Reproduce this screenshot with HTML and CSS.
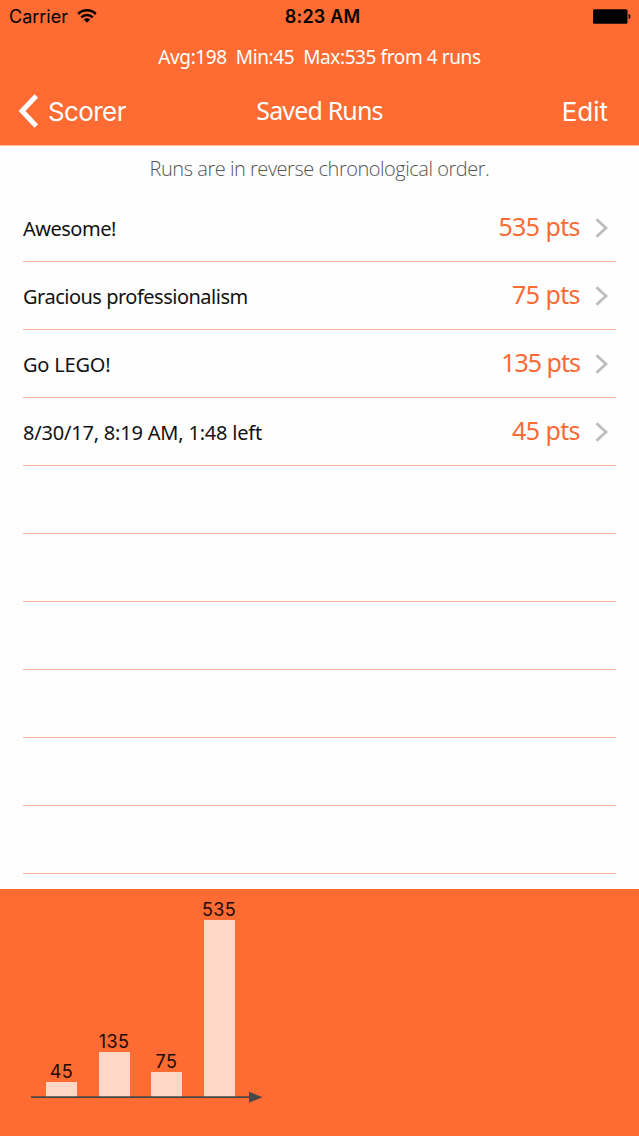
FILE: index.html
```html
<!DOCTYPE html>
<html lang="en">
<head>
    <meta charset="UTF-8">
    <meta name="viewport" content="width=device-width, initial-scale=1.0">
    <title>Saved Runs</title>
    <link rel="stylesheet" href="styles.css">
</head>
<body>
    <header class="header">
        <div class="status-bar">
            <div class="carrier">
                <span>Carrier</span>
                <svg class="wifi" width="20" height="14" viewBox="0 0 20 14">
                    <path d="M1.2 5a12.4 12.4 0 0 1 17.6 0M4.3 8.4a8 8 0 0 1 11.4 0" fill="none" stroke="#000" stroke-width="2.5"/>
                    <path d="M10 13.8L6.8 10.6a4.6 4.6 0 0 1 6.4 0z"/>
                </svg>
            </div>
            <div class="clock">8:23 AM</div>
            <svg class="battery" width="38" height="15" viewBox="0 0 38 15">
                <rect x="0" y="0.3" width="34.5" height="14.4" rx="1.5"/>
                <path d="M35.6 4.8c2.4 0.8 2.4 4.6 0 5.4z"/>
            </svg>
        </div>
        <div class="stats">Avg:198  Min:45  Max:535 from 4 runs</div>
        <nav class="nav">
            <a class="back">
                <svg width="20" height="34" viewBox="0 0 20 34">
                    <path d="M18.3 2L4 17l14.3 15" fill="none" stroke="#fff" stroke-width="5"/>
                </svg>
                <span>Scorer</span>
            </a>
            <h1 class="title">Saved Runs</h1>
            <a class="edit">Edit</a>
        </nav>
    </header>

    <main class="runs">
        <p class="hint">Runs are in reverse chronological order.</p>
        <ul class="run-list">
            <li class="run">
                <span class="name">Awesome!</span>
                <span class="points">535 pts</span>
                <svg class="arrow" width="14" height="20" viewBox="0 0 14 20"><path d="M1.5 1.2l9.5 8.8-9.5 8.8"/></svg>
            </li>
            <li class="run">
                <span class="name">Gracious professionalism</span>
                <span class="points">75 pts</span>
                <svg class="arrow" width="14" height="20" viewBox="0 0 14 20"><path d="M1.5 1.2l9.5 8.8-9.5 8.8"/></svg>
            </li>
            <li class="run">
                <span class="name loose">Go LEGO!</span>
                <span class="points tight">135 pts</span>
                <svg class="arrow" width="14" height="20" viewBox="0 0 14 20"><path d="M1.5 1.2l9.5 8.8-9.5 8.8"/></svg>
            </li>
            <li class="run">
                <span class="name loose">8/30/17, 8:19 AM, 1:48 left</span>
                <span class="points">45 pts</span>
                <svg class="arrow" width="14" height="20" viewBox="0 0 14 20"><path d="M1.5 1.2l9.5 8.8-9.5 8.8"/></svg>
            </li>
            <li class="run"></li>
            <li class="run"></li>
            <li class="run"></li>
            <li class="run"></li>
            <li class="run"></li>
            <li class="run"></li>
        </ul>
    </main>

    <footer class="chart">
        <div class="bars">
            <div class="column"><span>45</span><div class="bar" style="height: 15px"></div></div>
            <div class="column"><span>135</span><div class="bar" style="height: 45px"></div></div>
            <div class="column"><span>75</span><div class="bar" style="height: 25px"></div></div>
            <div class="column"><span>535</span><div class="bar" style="height: 177px"></div></div>
        </div>
        <svg class="axis" width="232" height="12" viewBox="0 0 232 12">
            <path d="M0 6.2h220" stroke="#484848" stroke-width="1.8"/>
            <path d="M218 0.7v11l13.5-5.5z" fill="#484848"/>
        </svg>
    </footer>
</body>
</html>
```
FILE: styles.css
```css
body {
    font-family: "Noto Sans", "Open Sans", sans-serif;
    background-color: #fefefe;
    margin: 0;
    width: 639px;
    height: 1136px;
    display: flex;
    flex-direction: column;
    overflow: hidden;
}

.header {
    background-color: #fe6c33;
    color: #fff;
    height: 146px;
    flex: none;
    border-bottom: 1px solid #ffb899;
    box-sizing: border-box;
}

.status-bar {
    display: grid;
    grid-template-columns: 1fr auto 1fr;
    align-items: center;
    height: 32px;
    padding: 0 8px 0 9px;
    color: #000;
    font-family: Inter, sans-serif;
    font-size: 18px;
}

.carrier {
    display: flex;
    align-items: center;
    gap: 9px;
}

.clock {
    margin-left: 5px;
    font-weight: 600;
    letter-spacing: 0.2px;
}

.battery {
    justify-self: end;
}

.stats {
    height: 50px;
    line-height: 51px;
    text-align: center;
    font-size: 19px;
    letter-spacing: -0.4px;
    white-space: pre;
}

.nav {
    display: grid;
    grid-template-columns: 1fr auto 1fr;
    align-items: center;
    height: 58px;
    padding: 0 18px;
    font-size: 26px;
}

.back {
    display: flex;
    align-items: center;
    gap: 10px;
    font-family: Inter, sans-serif;
    letter-spacing: -0.6px;
}

.title {
    margin: 0 0 3px;
    font-size: 25px;
    font-weight: 400;
    letter-spacing: -0.85px;
}

.edit {
    justify-self: end;
    margin-right: 13px;
    font-family: Inter, sans-serif;
}

.runs {
    height: 743px;
    flex: none;
    overflow: hidden;
}

.hint {
    margin: 0;
    height: 48px;
    line-height: 46px;
    text-align: center;
    font-family: "Open Sans", sans-serif;
    font-weight: 300;
    font-size: 20px;
    letter-spacing: -0.47px;
    color: #555;
}

.run-list {
    list-style: none;
    margin: 0 23px;
    padding: 0;
}

.run {
    display: flex;
    align-items: center;
    height: 68px;
    box-sizing: border-box;
    border-bottom: 1px solid #f7b799;
}

.name {
    flex: 1;
    padding-top: 2px;
    font-size: 20px;
    letter-spacing: -0.5px;
    color: #111;
}

.name.loose {
    letter-spacing: -0.2px;
}

.points {
    padding-bottom: 3px;
    font-size: 25px;
    letter-spacing: -0.6px;
    color: #f96b35;
}

.points.tight {
    letter-spacing: -1px;
}

.arrow {
    margin: 0 7px 0 15px;
    fill: none;
    stroke: #bdbdbd;
    stroke-width: 2.8;
}

.chart {
    flex: 1;
    background-color: #fe6c33;
}

.bars {
    display: flex;
    align-items: flex-end;
    gap: 21.5px;
    height: 208px;
    padding-left: 46px;
}

.column {
    display: flex;
    flex-direction: column;
    align-items: center;
    width: 31px;
    font-family: Inter, sans-serif;
    font-size: 18px;
    letter-spacing: 0.4px;
    line-height: 20px;
    color: #200a02;
}

.bar {
    width: 31px;
    background-color: #fed7c6;
}

.axis {
    display: block;
    margin: -6px 0 0 31px;
}
```
